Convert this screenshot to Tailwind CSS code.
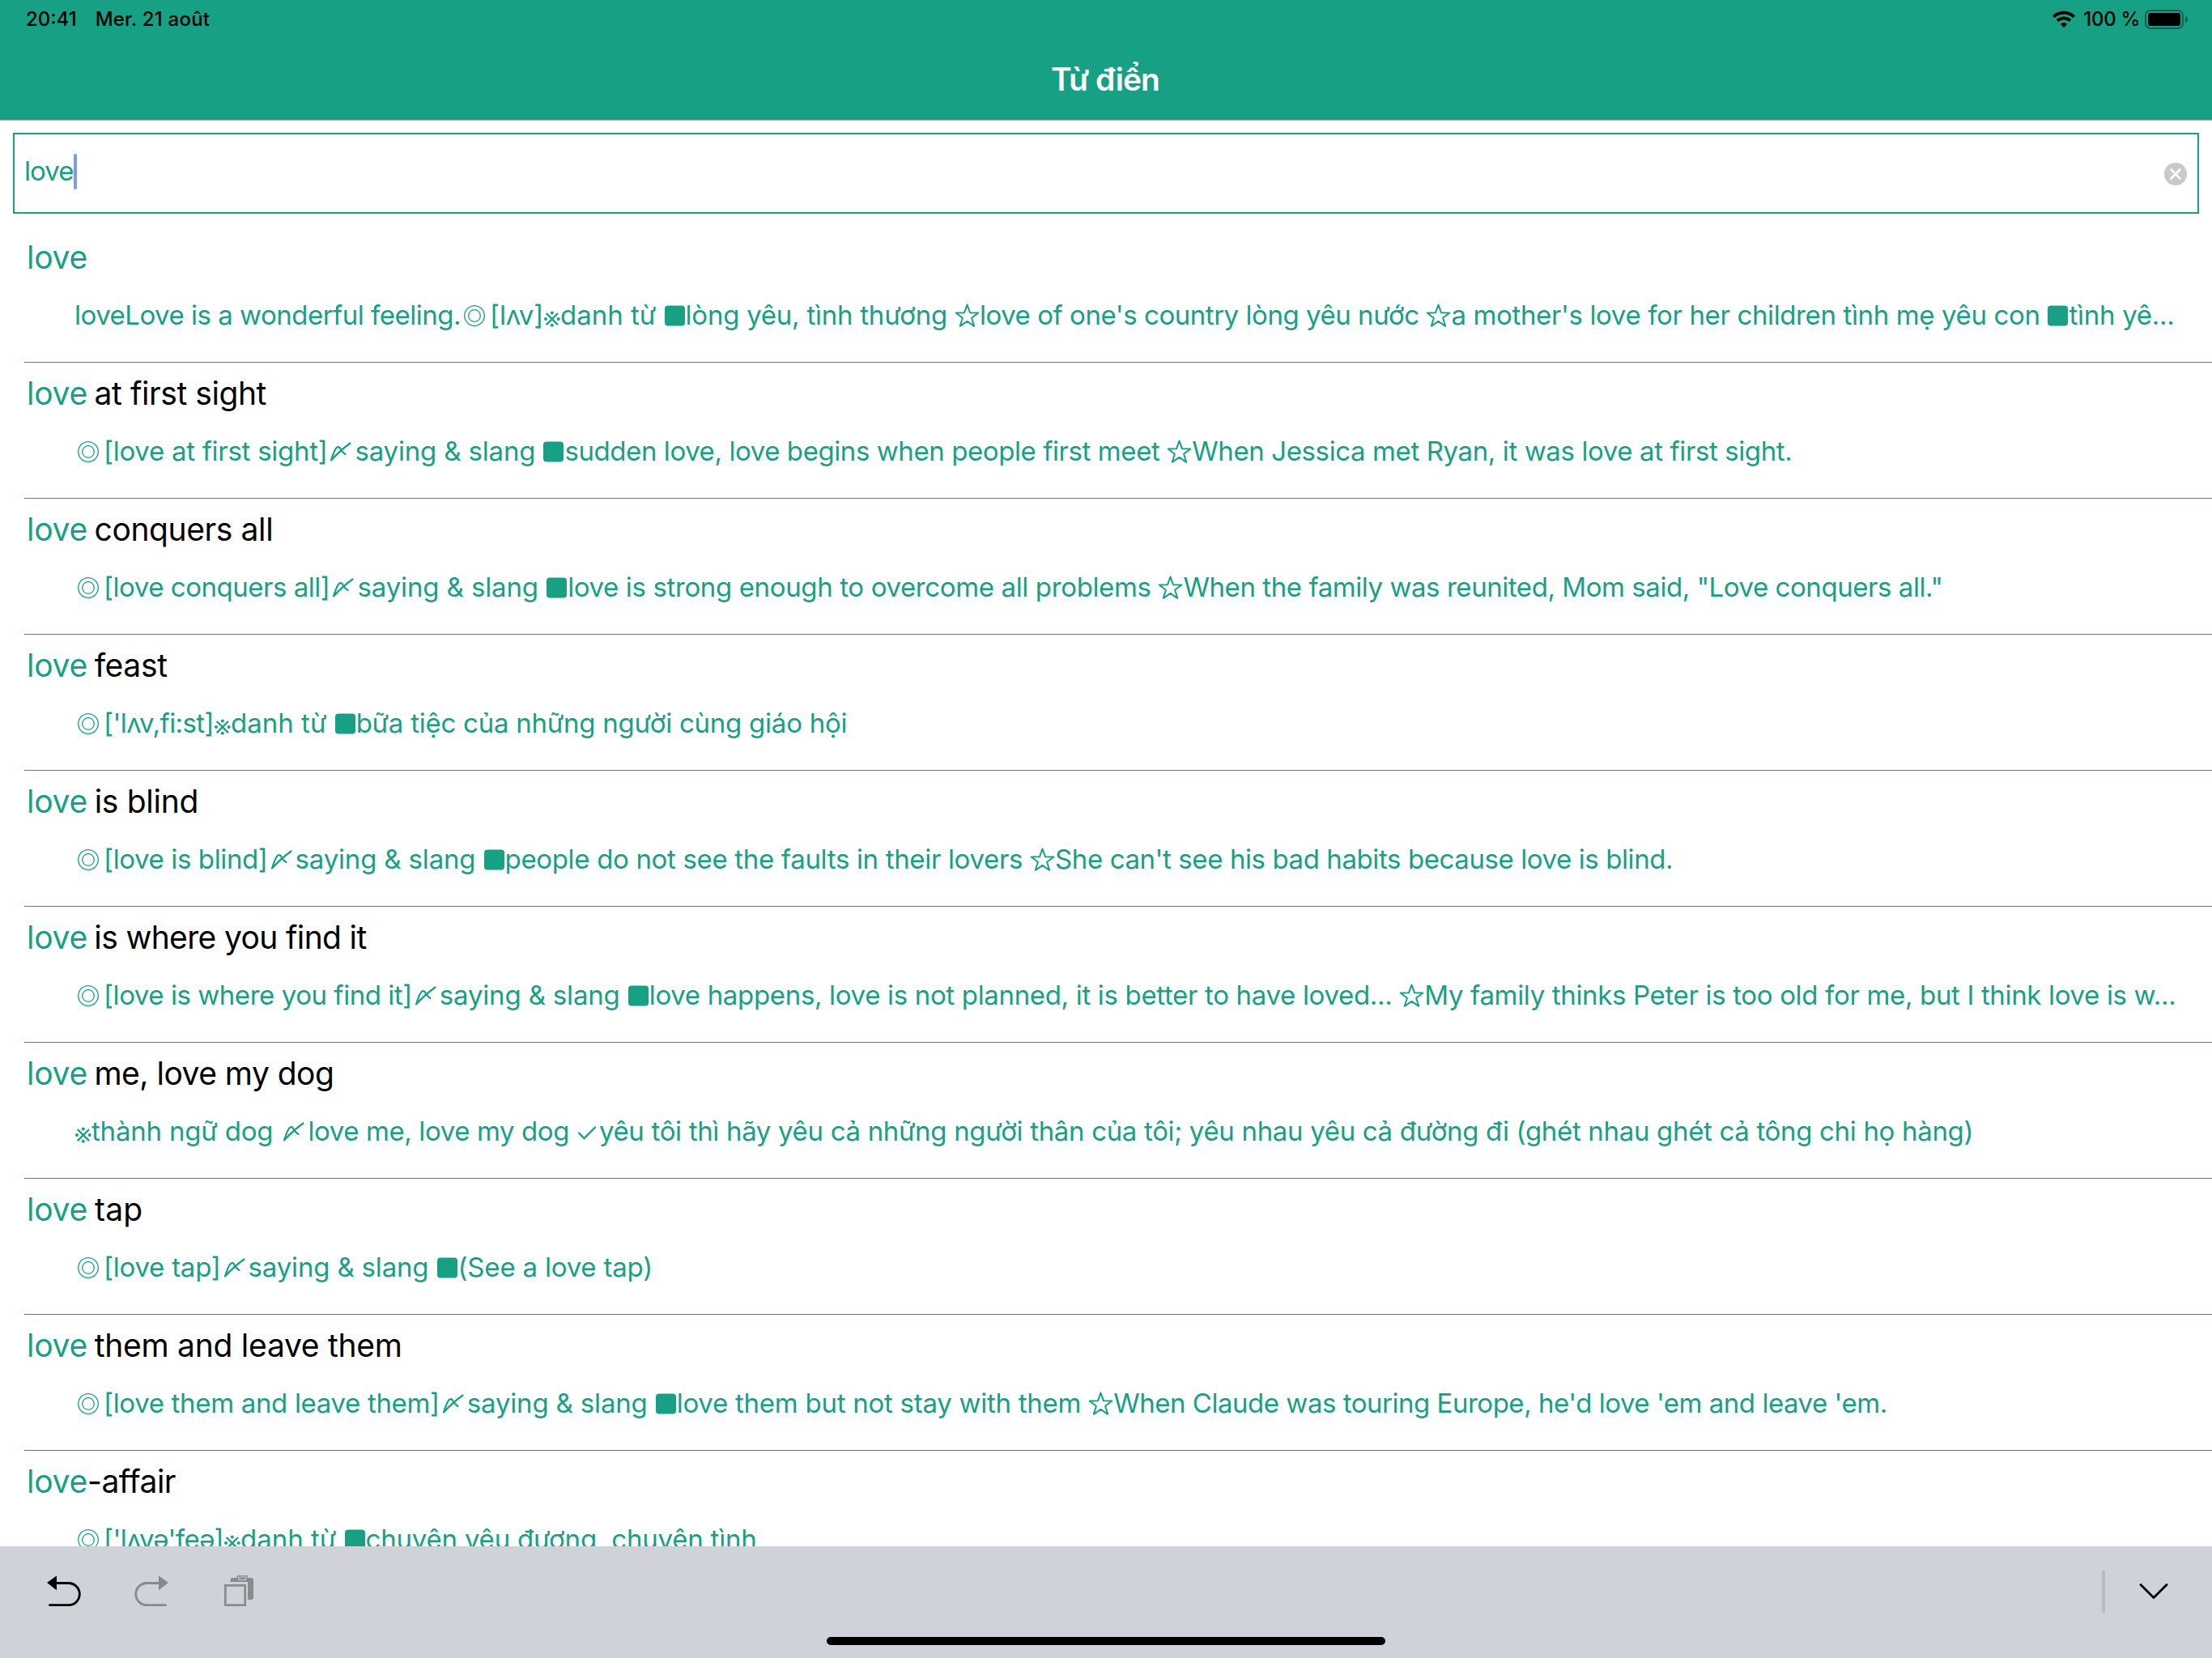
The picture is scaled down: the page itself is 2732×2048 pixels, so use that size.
<!DOCTYPE html>
<html lang="vi">
<head>
    <meta charset="UTF-8">
    <meta name="viewport" content="width=device-width, initial-scale=1.0">
    <title>Từ điển</title>
    <script src="https://cdn.jsdelivr.net/npm/@tailwindcss/browser@4"></script>
</head>
<body class="bg-white font-['Inter','Noto_Sans',sans-serif] text-black">
    <!-- dictionary marks -->
    <svg class="hidden">
        <symbol id="ring" viewBox="0 0 36 34">
            <g fill="none" stroke="currentColor" stroke-width="1.3"><circle cx="17" cy="17" r="12.3"/><circle cx="17" cy="17" r="7.3"/></g>
        </symbol>
        <symbol id="note" viewBox="0 0 21 34">
            <path d="M3.700 14L18 28.200M18 14L3.700 28.200" fill="none" stroke="currentColor" stroke-width="2.400"/>
            <g fill="currentColor"><circle cx="10.800" cy="13.500" r="2"/><circle cx="10.800" cy="28.700" r="2"/><circle cx="3" cy="21.100" r="2"/><circle cx="18.700" cy="21.100" r="2"/></g>
        </symbol>
        <symbol id="shime" viewBox="0 0 34 34">
            <path d="M5 27.500C7 21 9 16 10.500 13.500C12 10.800 15 10.300 16 12.500C17 16 20 18 22.500 20M5 27.500C11 21 20 12.500 28.500 6.500" fill="none" stroke="currentColor" stroke-width="2.200" stroke-linecap="round" stroke-linejoin="round"/>
        </symbol>
        <symbol id="block" viewBox="0 0 27 34">
            <rect x="1" y="4.500" width="25" height="25" rx="4" fill="currentColor"/>
        </symbol>
        <symbol id="star" viewBox="0 0 31 34">
            <path d="M15.500 3.500L19 13.200L29.300 13.500L21.100 19.800L24.200 29.800L15.500 23.900L6.800 29.800L9.900 19.800L1.700 13.500L12 13.200Z" fill="none" stroke="currentColor" stroke-width="2" stroke-linejoin="round"/>
        </symbol>
        <symbol id="check" viewBox="0 0 28 34">
            <path d="M3 18.500L9.500 25L23 11.500" fill="none" stroke="currentColor" stroke-width="2.300" stroke-linecap="round"/>
        </symbol>
    </svg>

    <div class="flex flex-col w-[2732px] h-[2048px] overflow-hidden">
        <header class="h-[149px] shrink-0 bg-[#18a085] border-b border-[#a8b0ae] flex flex-col">
            <div class="h-12 flex items-center justify-between pl-8 pr-[30px] text-2xl font-medium">
                <div class="flex gap-[23px]"><span>20:41</span><span class="tracking-[0.2px]">Mer. 21 août</span></div>
                <div class="flex items-center">
                    <svg class="w-7 h-[22px] mr-[10px]" viewBox="0 0 28 22"><g fill="none" stroke="#000" stroke-width="3.800"><path d="M1.300 7.800a18 18 0 0 1 25.400 0"/><path d="M6 12.700a11.300 11.300 0 0 1 16 0"/></g><path d="M14 21l-4.200-4.200a6 6 0 0 1 8.400 0z"/></svg>
                    <span class="mr-[6px] tracking-[-0.3px]">100 %</span>
                    <svg class="w-[53px] h-6" viewBox="0 0 53 24"><rect x="1" y="1" width="46" height="22" rx="6" fill="none" stroke="#000" stroke-opacity=".4" stroke-width="2"/><rect x="4" y="4" width="40" height="16" rx="3"/><path d="M50 8q3 1 3 4t-3 4z" fill-opacity=".4"/></svg>
                </div>
            </div>
            <h1 class="flex-1 flex items-center justify-center pb-0.5 pr-0.5 text-[39px] leading-none font-semibold tracking-[-0.95px] text-white">Từ điển</h1>
        </header>

        <div class="h-[131px] shrink-0 px-4 pt-[15px]">
            <div class="h-[100px] border-2 border-[#18a085] flex items-center justify-between px-[13px] text-[33px] text-[#18a085]">
                <div class="flex items-center pb-1 -ml-px"><span class="pb-px tracking-[-0.9px]">love</span><span class="w-1 h-11 rounded-full bg-[#7d98f7]"></span></div>
                <svg class="size-7 mt-0.5" viewBox="0 0 28 28"><circle cx="14" cy="14" r="14" fill="#c9c9c9"/><path d="M8.500 8.500l11 11M19.500 8.500l-11 11" stroke="#fff" stroke-width="2.600" stroke-linecap="round"/></svg>
            </div>
        </div>

        <main class="flex-1 min-h-0 overflow-hidden pl-[30px] text-[#18a085] [&_h2]:whitespace-pre [&_p]:whitespace-pre [&_svg]:h-[34px] [&_svg]:shrink-0">
            <article class="h-42 border-b border-[#18a085]">
                <h2 class="h-[76px] pl-[3px] text-[39px] leading-[76px] tracking-[-0.24px]">love</h2>
                <p class="pl-[62px] h-[67px] flex items-center text-[33px]"><span class="tracking-[-0.5px]">loveLove is a wonderful feeling.</span><svg class="w-9"><use href="#ring"/></svg><span class="tracking-[-0.19px]">[lʌv]</span><svg class="w-[21px]"><use href="#note"/></svg><span>danh từ </span><svg class="w-[27px]"><use href="#block"/></svg><span class="tracking-[-0.24px]">lòng yêu, tình thương </span><svg class="w-[31px]"><use href="#star"/></svg><span class="tracking-[-0.46px]">love of one's country lòng yêu nước </span><svg class="w-[31px]"><use href="#star"/></svg><span class="tracking-[-0.37px]">a mother's love for her children tình mẹ yêu con </span><svg class="w-[27px]"><use href="#block"/></svg><span class="tracking-[-0.28px]">tình yê...</span></p>
            </article>
            <article class="h-42 border-b border-[#18a085]">
                <h2 class="h-[76px] pl-[3px] text-[39px] leading-[76px] tracking-[-0.24px]">love<span class="-ml-0.5 text-black tracking-[-0.42px]"> at first sight</span></h2>
                <p class="pl-[62px] h-[67px] flex items-center text-[33px]"><svg class="w-9"><use href="#ring"/></svg><span class="tracking-[-0.28px]">[love at first sight]</span><svg class="w-[34px]"><use href="#shime"/></svg><span class="tracking-[-0.17px]">saying &amp; slang </span><svg class="w-[27px]"><use href="#block"/></svg><span class="tracking-[-0.42px]">sudden love, love begins when people first meet </span><svg class="w-[31px]"><use href="#star"/></svg><span class="tracking-[-0.39px]">When Jessica met Ryan, it was love at first sight.</span></p>
            </article>
            <article class="h-42 border-b border-[#18a085]">
                <h2 class="h-[76px] pl-[3px] text-[39px] leading-[76px] tracking-[-0.24px]">love<span class="-ml-0.5 text-black tracking-[-0.4px]"> conquers all</span></h2>
                <p class="pl-[62px] h-[67px] flex items-center text-[33px]"><svg class="w-9"><use href="#ring"/></svg><span class="tracking-[-0.47px]">[love conquers all]</span><svg class="w-[34px]"><use href="#shime"/></svg><span class="tracking-[-0.12px]">saying &amp; slang </span><svg class="w-[27px]"><use href="#block"/></svg><span class="tracking-[-0.37px]">love is strong enough to overcome all problems </span><svg class="w-[31px]"><use href="#star"/></svg><span class="tracking-[-0.44px]">When the family was reunited, Mom said, "Love conquers all."</span></p>
            </article>
            <article class="h-42 border-b border-[#18a085]">
                <h2 class="h-[76px] pl-[3px] text-[39px] leading-[76px] tracking-[-0.24px]">love<span class="-ml-0.5 text-black tracking-[-0.35px]"> feast</span></h2>
                <p class="pl-[62px] h-[67px] flex items-center text-[33px]"><svg class="w-9"><use href="#ring"/></svg><span class="tracking-[-0.56px]">['lʌv,fi:st]</span><svg class="w-[21px]"><use href="#note"/></svg><span>danh từ </span><svg class="w-[27px]"><use href="#block"/></svg><span class="tracking-[-0.24px]">bữa tiệc của những người cùng giáo hội</span></p>
            </article>
            <article class="h-42 border-b border-[#18a085]">
                <h2 class="h-[76px] pl-[3px] text-[39px] leading-[76px] tracking-[-0.24px]">love<span class="-ml-0.5 text-black tracking-[-0.3px]"> is blind</span></h2>
                <p class="pl-[62px] h-[67px] flex items-center text-[33px]"><svg class="w-9"><use href="#ring"/></svg><span class="tracking-[-0.38px]">[love is blind]</span><svg class="w-[34px]"><use href="#shime"/></svg><span class="tracking-[-0.17px]">saying &amp; slang </span><svg class="w-[27px]"><use href="#block"/></svg><span class="tracking-[-0.33px]">people do not see the faults in their lovers </span><svg class="w-[31px]"><use href="#star"/></svg><span class="tracking-[-0.41px]">She can't see his bad habits because love is blind.</span></p>
            </article>
            <article class="h-42 border-b border-[#18a085]">
                <h2 class="h-[76px] pl-[3px] text-[39px] leading-[76px] tracking-[-0.24px]">love<span class="-ml-0.5 text-black tracking-[-0.64px]"> is where you find it</span></h2>
                <p class="pl-[62px] h-[67px] flex items-center text-[33px]"><svg class="w-9"><use href="#ring"/></svg><span class="tracking-[-0.45px]">[love is where you find it]</span><svg class="w-[34px]"><use href="#shime"/></svg><span class="tracking-[-0.17px]">saying &amp; slang </span><svg class="w-[27px]"><use href="#block"/></svg><span class="tracking-[-0.33px]">love happens, love is not planned, it is better to have loved... </span><svg class="w-[31px]"><use href="#star"/></svg><span class="tracking-[-0.34px]">My family thinks Peter is too old for me, but I think love is w...</span></p>
            </article>
            <article class="h-42 border-b border-[#18a085]">
                <h2 class="h-[76px] pl-[3px] text-[39px] leading-[76px] tracking-[-0.24px]">love<span class="-ml-0.5 text-black tracking-[-0.52px]"> me, love my dog</span></h2>
                <p class="pl-[62px] h-[67px] flex items-center text-[33px]"><svg class="w-[21px]"><use href="#note"/></svg><span class="tracking-[-0.19px]">thành ngữ dog </span><svg class="w-[34px]"><use href="#shime"/></svg><span class="tracking-[-0.4px]">love me, love my dog </span><svg class="w-7"><use href="#check"/></svg><span class="tracking-[-0.33px]">yêu tôi thì hãy yêu cả những người thân của tôi; yêu nhau yêu cả đường đi (ghét nhau ghét cả tông chi họ hàng)</span></p>
            </article>
            <article class="h-42 border-b border-[#18a085]">
                <h2 class="h-[76px] pl-[3px] text-[39px] leading-[76px] tracking-[-0.24px]">love<span class="-ml-0.5 text-black tracking-[0.1px]"> tap</span></h2>
                <p class="pl-[62px] h-[67px] flex items-center text-[33px]"><svg class="w-9"><use href="#ring"/></svg><span class="tracking-[-0.24px]">[love tap]</span><svg class="w-[34px]"><use href="#shime"/></svg><span class="tracking-[-0.17px]">saying &amp; slang </span><svg class="w-[27px]"><use href="#block"/></svg><span class="tracking-[-0.2px]">(See a love tap)</span></p>
            </article>
            <article class="h-42 border-b border-[#18a085]">
                <h2 class="h-[76px] pl-[3px] text-[39px] leading-[76px] tracking-[-0.24px]">love<span class="-ml-0.5 text-black tracking-[-0.26px]"> them and leave them</span></h2>
                <p class="pl-[62px] h-[67px] flex items-center text-[33px]"><svg class="w-9"><use href="#ring"/></svg><span class="tracking-[-0.33px]">[love them and leave them]</span><svg class="w-[34px]"><use href="#shime"/></svg><span class="tracking-[-0.17px]">saying &amp; slang </span><svg class="w-[27px]"><use href="#block"/></svg><span class="tracking-[-0.26px]">love them but not stay with them </span><svg class="w-[31px]"><use href="#star"/></svg><span class="tracking-[-0.48px]">When Claude was touring Europe, he'd love 'em and leave 'em.</span></p>
            </article>
            <article class="h-42">
                <h2 class="h-[76px] pl-[3px] text-[39px] leading-[76px] tracking-[-0.24px]">love<span class="text-black tracking-[-0.52px]">-affair</span></h2>
                <p class="pl-[62px] h-[67px] flex items-center text-[33px]"><svg class="w-9"><use href="#ring"/></svg><span class="tracking-[-0.56px]">['lʌvə'feə]</span><svg class="w-[21px]"><use href="#note"/></svg><span>danh từ </span><svg class="w-[27px]"><use href="#block"/></svg><span class="tracking-[-0.21px]">chuyện yêu đương, chuyện tình</span></p>
            </article>
        </main>

        <!-- keyboard shortcut bar -->
        <footer class="h-[138px] shrink-0 bg-[#cfd2d9] flex flex-col justify-between">
            <div class="flex items-center justify-between pt-[30px] pl-[58px] pr-[54px]">
                <div class="flex items-center pb-0.5 text-[#888a8d]">
                    <svg class="w-[42px] h-[38px] mr-[66px] text-black" viewBox="0 0 42 38"><path d="M0 9L12 .3V18.200Z" fill="currentColor"/><path d="M11 9.500H26.700a13.600 13.600 0 0 1 0 27.200H3.500" fill="none" stroke="currentColor" stroke-width="2.800" stroke-linecap="round"/></svg>
                    <svg class="w-[42px] h-[38px] mr-[69px]" viewBox="0 0 42 38"><path d="M42 9L30 .3V18.200Z" fill="currentColor"/><path d="M31 9.500H15.300a13.600 13.600 0 0 0 0 27.200H38.500" fill="none" stroke="currentColor" stroke-width="2.800" stroke-linecap="round"/></svg>
                    <svg class="w-[37px] h-[38px]" viewBox="0 0 37 38" fill="currentColor"><path d="M7.500 8V6a3 3 0 0 1 3-3H33a3 3 0 0 1 3 3V27a3 3 0 0 1-3 3H29V8Z"/><rect x="15.700" width="13" height="6.500"/><rect x="17.700" y="2" width="9" height="3.500" fill="none" stroke="#cfd2d9"/><rect x="1.300" y="12.300" width="24.400" height="24.400" fill="none" stroke="currentColor" stroke-width="2.700"/></svg>
                </div>
                <div class="flex items-center">
                    <span class="w-1 h-[52px] bg-[#b9babd] mr-[42px]"></span>
                    <svg class="w-9 h-5" viewBox="0 0 36 20" fill="none" stroke="#000" stroke-width="2.800" stroke-linecap="round" stroke-linejoin="round"><path d="M2 1.500L18 17.500L34 1.500"/></svg>
                </div>
            </div>
            <div class="w-[690px] h-[10px] rounded-full bg-black self-center mb-4"></div>
        </footer>
    </div>
</body>
</html>
